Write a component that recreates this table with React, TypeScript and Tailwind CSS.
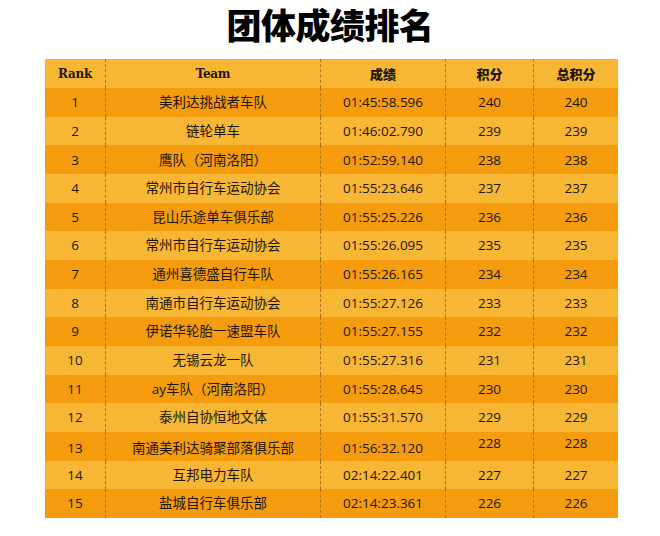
import React from "react";

const rows: [string, string, string, string, string][] = [
  ["1", "美利达挑战者车队", "01:45:58.596", "240", "240"],
  ["2", "链轮单车", "01:46:02.790", "239", "239"],
  ["3", "鹰队（河南洛阳）", "01:52:59.140", "238", "238"],
  ["4", "常州市自行车运动协会", "01:55:23.646", "237", "237"],
  ["5", "昆山乐途单车俱乐部", "01:55:25.226", "236", "236"],
  ["6", "常州市自行车运动协会", "01:55:26.095", "235", "235"],
  ["7", "通州喜德盛自行车队", "01:55:26.165", "234", "234"],
  ["8", "南通市自行车运动协会", "01:55:27.126", "233", "233"],
  ["9", "伊诺华轮胎一速盟车队", "01:55:27.155", "232", "232"],
  ["10", "无锡云龙一队", "01:55:27.316", "231", "231"],
  ["11", "ay车队（河南洛阳）", "01:55:28.645", "230", "230"],
  ["12", "泰州自协恒地文体", "01:55:31.570", "229", "229"],
  ["13", "南通美利达骑聚部落俱乐部", "01:56:32.120", "228", "228"],
  ["14", "互邦电力车队", "02:14:22.401", "227", "227"],
  ["15", "盐城自行车俱乐部", "02:14:23.361", "226", "226"],
];

const grid = "grid grid-cols-[60px_215px_125px_88px_85px]";
const div = "border-l border-dashed border-[#b0741e]";
const body = "font-['Open_Sans','Noto_Sans_CJK_SC',sans-serif]";

export default function App() {
  return (
    <div className="w-[660px] h-[536px] bg-white overflow-hidden">
      <h1 className="text-center h-[59px] pt-[1px] text-[35px] leading-[46px] font-black text-black font-['Noto_Sans_CJK_SC',sans-serif] tracking-[-0.5px]">
        团体成绩排名
      </h1>
      <div className="ml-[45px] w-[573px]">
        <div className={`${grid} h-[29px] bg-[#f7b633] text-[#22160a]`}>
          <div className="flex items-center justify-center font-bold text-[12px] font-['DejaVu_Serif',serif] tracking-[-0.3px]">Rank</div>
          <div className={`${div} flex items-center justify-center font-bold text-[12px] font-['DejaVu_Serif',serif] tracking-[-0.3px]`}>Team</div>
          <div className={`${div} flex items-center justify-center font-black text-[13px] font-['Noto_Sans_CJK_SC',sans-serif]`}>成绩</div>
          <div className={`${div} flex items-center justify-center font-black text-[13px] font-['Noto_Sans_CJK_SC',sans-serif]`}>积分</div>
          <div className={`${div} flex items-center justify-center font-black text-[13px] font-['Noto_Sans_CJK_SC',sans-serif]`}>总积分</div>
        </div>
        {rows.map((r, i) => {
          const odd = i % 2 === 0;
          const is13 = r[0] === "13";
          return (
            <div
              key={r[0]}
              className={`${grid} h-[28.67px] ${odd ? "bg-[#f49c0e]" : "bg-[#f7b633]"} text-[#22160a] text-[13.5px] ${body}`}
            >
              <div className={`flex items-center justify-center ${is13 ? "pt-[3px]" : ""}`}>{r[0]}</div>
              <div className={`${div} flex items-center justify-center ${is13 ? "pt-[3px]" : ""}`}>{r[1]}</div>
              <div className={`${div} flex items-center justify-center ${is13 ? "pt-[3px]" : ""}`}>{r[2]}</div>
              <div className={`${div} flex items-center justify-center ${is13 ? "pb-[6px]" : ""}`}>{r[3]}</div>
              <div className={`${div} flex items-center justify-center ${is13 ? "pb-[6px]" : ""}`}>{r[4]}</div>
            </div>
          );
        })}
      </div>
    </div>
  );
}
